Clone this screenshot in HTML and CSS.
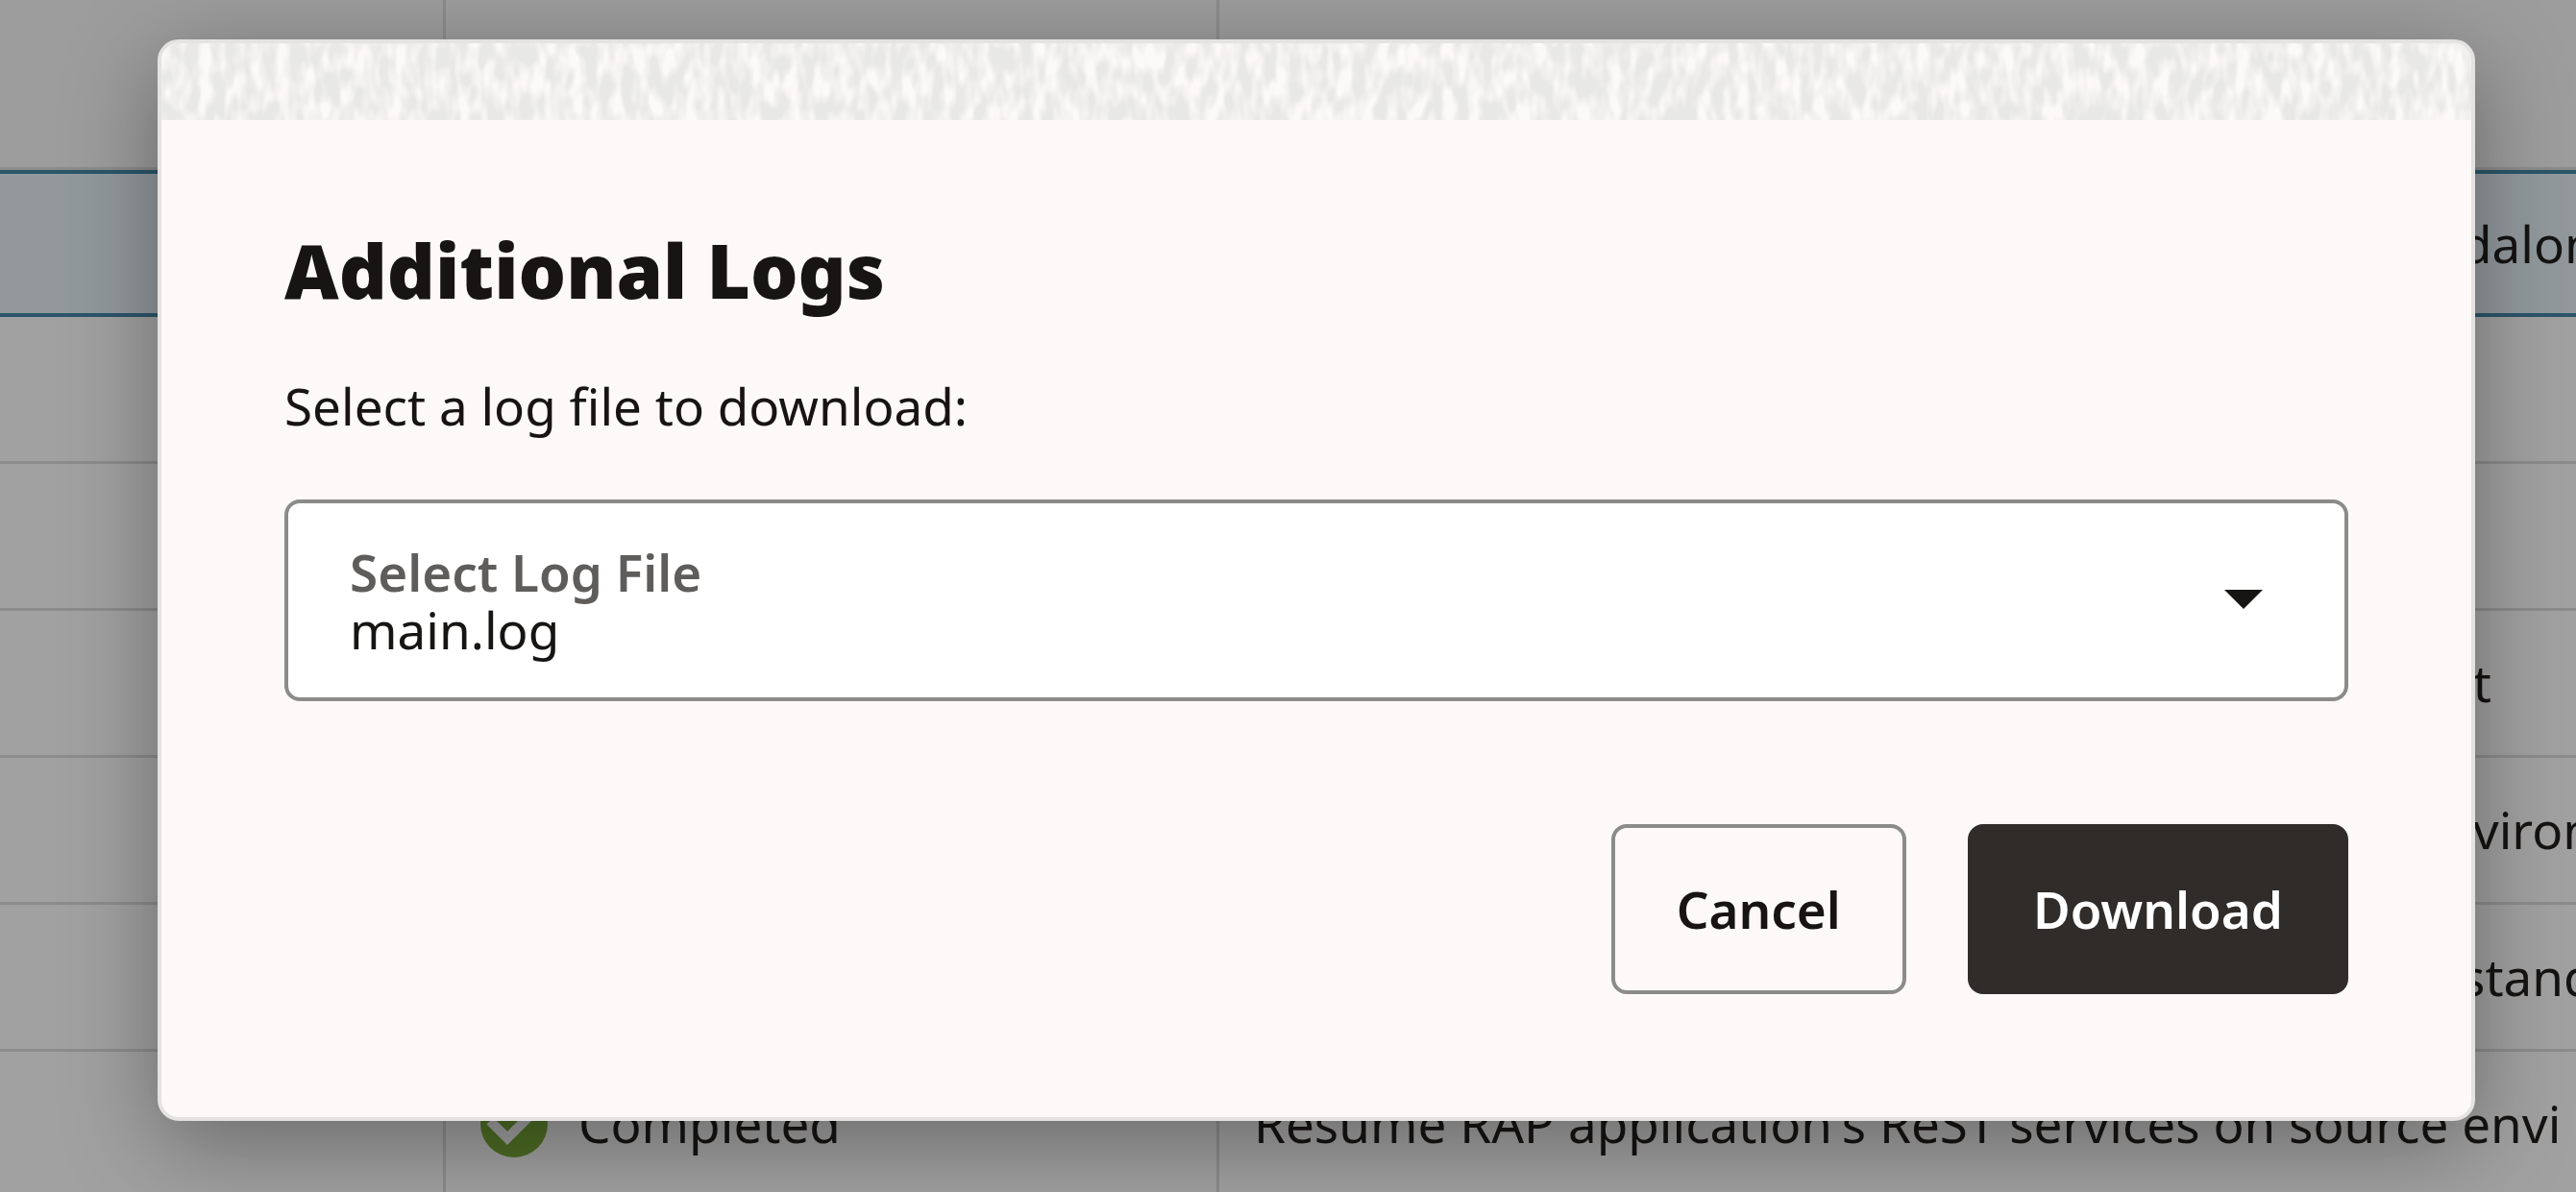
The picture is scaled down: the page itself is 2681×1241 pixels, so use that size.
FILE: index.html
```html
<!DOCTYPE html>
<html lang="en">
<head>
    <meta charset="UTF-8">
    <meta name="viewport" content="width=device-width, initial-scale=1.0">
    <title>Additional Logs</title>
    <link rel="stylesheet" href="styles.css">
</head>
<body>
    <table class="jobs">
        <colgroup>
            <col class="col-first">
            <col class="col-status">
            <col>
        </colgroup>
        <thead>
            <tr><th></th><th></th><th></th></tr>
        </thead>
        <tbody>
            <tr class="selected"><td></td><td></td><td class="tail">dalon</td></tr>
            <tr><td></td><td></td><td></td></tr>
            <tr><td></td><td></td><td></td></tr>
            <tr><td></td><td></td><td class="tail-wide">nt</td></tr>
            <tr><td></td><td></td><td class="tail-wide">nviron</td></tr>
            <tr><td></td><td></td><td class="tail">stand</td></tr>
            <tr>
                <td></td>
                <td>
                    <div class="status">
                        <svg class="status-icon" viewBox="0 0 70 70" aria-hidden="true">
                            <circle cx="35" cy="35" r="35" fill="#72a830"/>
                            <path d="M10 32 L28 50 L58 20" fill="none" stroke="#fff" stroke-width="10"/>
                        </svg>
                        <span>Completed</span>
                    </div>
                </td>
                <td>Resume RAP application's ReST services on source envi</td>
            </tr>
        </tbody>
    </table>

    <div class="overlay">
        <div class="dialog" role="dialog" aria-modal="true" aria-labelledby="dialog-title">
            <svg class="strip" aria-hidden="true">
                <filter id="texture" x="0" y="0" width="100%" height="100%" color-interpolation-filters="sRGB">
                    <feTurbulence type="fractalNoise" baseFrequency="0.075 0.034" numOctaves="2" seed="4"/>
                    <feColorMatrix values="0 0 0 0 0.99  0 0 0 0 0.98  0 0 0 0 0.975  3 0 0 0 -1.1"/>
                </filter>
                <rect width="100%" height="100%" fill="#e8e8e6"/>
                <rect width="100%" height="100%" filter="url(#texture)"/>
            </svg>
            <div class="dialog-body">
                <h1 id="dialog-title">Additional Logs</h1>
                <p>Select a log file to download:</p>
                <div class="field">
                    <label for="log-file">Select Log File</label>
                    <select id="log-file">
                        <option>main.log</option>
                    </select>
                    <svg class="arrow" viewBox="0 0 40 20" aria-hidden="true">
                        <path d="M0 0H40L20 20Z" fill="#161513"/>
                    </svg>
                </div>
                <div class="actions">
                    <button type="button">Cancel</button>
                    <button type="button" class="primary">Download</button>
                </div>
            </div>
        </div>
    </div>
</body>
</html>
```
FILE: styles.css
```css
* {
    box-sizing: border-box;
}
body {
    margin: 0;
    height: 100vh;
    overflow: hidden;
    font-family: "Noto Sans", sans-serif;
    font-size: 53px;
    line-height: 60px;
    color: #161513;
    background-color: #fff;
}
/* Job table behind the dialog */
.jobs {
    width: 100%;
    table-layout: fixed;
    border-collapse: separate;
    border-spacing: 0;
}
.col-first {
    width: 464px;
}
.col-status {
    width: 805px;
}
.jobs th, .jobs td {
    height: 153px;
    padding: 0 36px;
    border-right: 3px solid #dcdcdc;
    border-bottom: 3px solid #dcdcdc;
    text-align: left;
    white-space: nowrap;
    overflow: hidden;
}
.jobs th {
    height: 177px;
    background-color: #f8f8f8;
}
.jobs th:last-child, .jobs td:last-child {
    padding-right: 0;
    border-right: 0;
}
.jobs .selected td {
    background-color: #e4f1f7;
    border-top: 4px solid #3a83a3;
    border-bottom: 4px solid #3a83a3;
    border-right: 0;
}
.jobs .tail {
    padding-left: 1292px;
}
.jobs .tail-wide {
    padding-left: 1272px;
}
.status {
    display: flex;
    align-items: center;
    gap: 32px;
}
.status-icon {
    width: 70px;
    height: 70px;
}
/* Dialog */
.overlay {
    position: fixed;
    inset: 0;
    padding: 41px 105px 0 164px;
    background-color: rgba(22, 21, 19, 0.4);
}
.dialog {
    overflow: hidden;
    border: 4px solid #e4e3e1;
    border-radius: 22px;
    background-color: #fdf9f8;
    box-shadow: 0 24px 96px rgba(0, 0, 0, 0.35);
}
.strip {
    display: block;
    width: 100%;
    height: 80px;
}
.dialog-body {
    padding: 108px 128px 128px;
}
h1 {
    margin: 0 0 64px;
    font-size: 78px;
    line-height: 96px;
    font-weight: 900;
}
p {
    margin: 0 0 67px;
}
.field {
    position: relative;
    padding: 46px 64px 36px;
    border: 4px solid #8b8c8a;
    border-radius: 16px;
    background-color: #fff;
}
.field label {
    display: block;
    line-height: 52px;
    font-weight: 600;
    color: #5e5d5b;
}
.field select {
    display: block;
    width: 100%;
    height: 68px;
    padding: 0;
    border: 0;
    appearance: none;
    background: transparent;
    color: inherit;
    font: inherit;
    line-height: 68px;
}
.arrow {
    position: absolute;
    right: 85px;
    top: 90px;
    width: 40px;
    height: 20px;
    pointer-events: none;
}
.actions {
    display: flex;
    justify-content: flex-end;
    gap: 64px;
    margin-top: 128px;
}
button {
    height: 177px;
    padding: 0 64px;
    border: 4px solid #8b8c8a;
    border-radius: 16px;
    background-color: transparent;
    color: #161513;
    font: inherit;
    font-weight: 600;
}
button.primary {
    border-color: #302c29;
    background-color: #302c29;
    color: #fff;
}
```
